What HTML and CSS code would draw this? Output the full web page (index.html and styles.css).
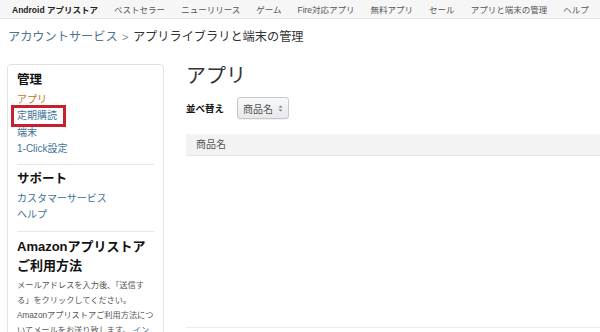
FILE: index.html
```html
<!DOCTYPE html>
<html lang="ja">

<head>
    <meta charset="UTF-8">
    <title>アプリライブラリと端末の管理</title>
    <link rel="stylesheet" href="styles.css">
</head>

<body>
    <div class="topnav">
        <a class="brand" href="#">Android アプリストア</a>
        <a href="#">ベストセラー</a>
        <a href="#">ニューリリース</a>
        <a href="#">ゲーム</a>
        <a href="#">Fire対応アプリ</a>
        <a href="#">無料アプリ</a>
        <a href="#">セール</a>
        <a href="#">アプリと端末の管理</a>
        <a href="#">ヘルプ</a>
    </div>

    <div class="crumbs">
        <a href="#">アカウントサービス</a>
        <span class="sep">&gt;</span>
        <span class="current">アプリライブラリと端末の管理</span>
    </div>

    <div class="page">
        <div class="sidebar">
            <div class="section">
                <h3>管理</h3>
                <a class="active" href="#">アプリ</a>
                <a class="marked" href="#">定期購読</a>
                <a href="#">端末</a>
                <a href="#">1-Click設定</a>
            </div>
            <div class="section">
                <h3>サポート</h3>
                <a href="#">カスタマーサービス</a>
                <a href="#">ヘルプ</a>
            </div>
            <div class="section">
                <h2>Amazonアプリストア<br>ご利用方法</h2>
                <p>メールアドレスを入力後、「送信する」をクリックしてください。Amazonアプリストアご利用方法についてメールをお送り致します。 <a href="#">インストール方法の詳細はこちら</a></p>
            </div>
        </div>

        <div class="content">
            <h1>アプリ</h1>
            <div class="sortbar">
                <label>並べ替え</label>
                <button class="sort">商品名
                    <svg width="5" height="7" viewBox="0 0 5 7"><path d="M2.5 0.5 L4.5 2.5 H0.5 Z M2.5 6.5 L4.5 4.5 H0.5 Z" fill="#777"/></svg>
                </button>
            </div>
            <div class="tablehead">商品名</div>
            <div class="tablebody"></div>
        </div>
    </div>
</body>

</html>
```

FILE: styles.css
```css
body {
    margin: 0;
    font-family: "Liberation Sans", "Noto Sans CJK JP", sans-serif;
    color: #333;
    background: #fff;
    overflow: hidden;
}

a {
    text-decoration: none;
}

.topnav {
    height: 18px;
    background: #f6f6f6;
    border-bottom: 1px solid #e8e8e8;
    display: flex;
    align-items: center;
    padding-left: 12px;
    gap: 16px;
    font-size: 8.5px;
    white-space: nowrap;
}

.topnav a {
    color: #555;
}

.topnav a.brand {
    color: #222;
    font-weight: bold;
}

.crumbs {
    padding: 9px 0 0 8px;
    height: 36px;
    box-sizing: border-box;
    font-size: 12.2px;
    line-height: 18px;
}

.crumbs a {
    color: #4f7391;
}

.crumbs .sep {
    color: #888;
    font-size: 11px;
    margin: 0 1px;
}

.crumbs .current {
    color: #333;
}

.page {
    display: flex;
    align-items: flex-start;
    padding: 9px 0 0 7px;
}

.sidebar {
    width: 137px;
    border: 1px solid #e2e2e2;
    border-radius: 4px;
    padding: 5px 9px 20px 9px;
    flex-shrink: 0;
}

.section {
    display: flex;
    flex-direction: column;
    align-items: flex-start;
    border-bottom: 1px solid #e6e6e6;
    padding-bottom: 6.5px;
    margin-bottom: 4px;
}

.section:last-child {
    border-bottom: none;
}

.section h3 {
    font-size: 12.5px;
    margin: 0 0 1.5px 0;
    color: #111;
    line-height: 20px;
}

.section a {
    font-size: 10px;
    color: #3f7396;
    line-height: 16.6px;
}

.section a.active {
    color: #c4731d;
}

.section a.marked {
    position: relative;
}

.section a.marked::after {
    content: "";
    position: absolute;
    top: -3px;
    bottom: -2px;
    left: -6px;
    right: -9px;
    border: 3px solid #c8202e;
}

.section h2 {
    font-size: 13px;
    line-height: 19px;
    margin: 1px 0 3px 0;
    color: #111;
}

.section p {
    font-size: 8.2px;
    line-height: 15.3px;
    color: #555;
    margin: 0;
}

.section p a {
    font-size: 8.2px;
    line-height: 15.3px;
}

.content {
    flex: 1;
    margin-left: 22px;
}

.content h1 {
    font-size: 20px;
    font-weight: normal;
    color: #333;
    margin: 0;
    line-height: 24px;
}

.sortbar {
    display: flex;
    align-items: center;
    margin-top: 9px;
    gap: 13px;
}

.sortbar label {
    font-size: 9.5px;
    font-weight: bold;
    color: #111;
}

.sort {
    font-family: inherit;
    font-size: 10px;
    color: #555;
    height: 22px;
    width: 52px;
    padding: 0;
    display: flex;
    align-items: center;
    justify-content: center;
    gap: 5px;
    border: 1px solid #c8c8c8;
    border-radius: 3px;
    background: linear-gradient(#f7f8fa, #e7e9ec);
    box-shadow: 0 1px 0 rgba(0, 0, 0, 0.06);
}

.tablehead {
    margin-top: 15px;
    height: 21px;
    line-height: 21px;
    background: #f3f3f3;
    border-bottom: 1px solid #e6e6e6;
    padding-left: 10px;
    font-size: 10px;
    color: #555;
}

.tablebody {
    height: 171px;
    border-bottom: 1px solid #ececec;
}
```
